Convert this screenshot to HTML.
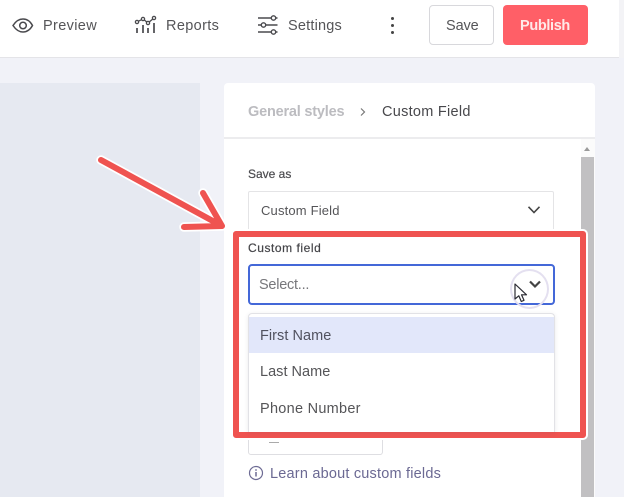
<!DOCTYPE html>
<html>
<head>
<meta charset="utf-8">
<style>
html,body{margin:0;padding:0}
body{width:624px;height:497px;overflow:hidden;position:relative;background:#f1f2f8;font-family:"Liberation Sans","DejaVu Sans",sans-serif}
div,span,svg{position:absolute}
.t{white-space:nowrap;line-height:20px;height:20px;color:#555558;filter:blur(.25px)}
</style>
</head>
<body>
<div style="left:0;top:0;width:619px;height:57px;background:#fff;border-bottom:1px solid #e4e4e8"></div>
<div style="left:619px;top:0;width:5px;height:58px;background:#f3f3f6"></div>
<div style="left:0;top:83px;width:200px;height:414px;background:#e6e9f1"></div>

<svg style="left:10px;top:12px" width="24" height="26" viewBox="0 0 24 26" fill="none" stroke="#4a4a4e" stroke-width="1.5"><path d="M3 13.5C6 8.8 9 7 13 7s7 1.800 9.500 6.500C20 18 17 20 13 20s-7-2-10-6.500z"/><circle cx="13" cy="13.500" r="3.300"/></svg>
<span class="t" style="left:43px;top:16px;font-size:14.500px;letter-spacing:.35px">Preview</span>

<svg style="left:133px;top:14px" width="26" height="24" viewBox="0 0 26 24" fill="none" stroke="#4a4a4e" stroke-width="1.300"><circle cx="4" cy="8" r="1.600"/><circle cx="10" cy="5" r="1.600"/><circle cx="15" cy="9" r="1.600"/><circle cx="21" cy="4" r="1.600"/><path d="M5.400 7.200L8.600 5.700M11.300 6L13.800 8M16.200 8L19.800 5"/><path stroke-width="1.700" d="M4 14v5M10 11v8M15 14v5M21 9v10"/></svg>
<span class="t" style="left:166px;top:16px;font-size:14.500px;letter-spacing:.35px">Reports</span>

<svg style="left:256px;top:14px" width="24" height="22" viewBox="0 0 24 22" fill="none" stroke="#4a4a4e" stroke-width="1.400"><path d="M2 4h13M20 4h1.500M2 11h3M10 11h11.500M2 18h13M20 18h1.500"/><circle cx="17.500" cy="4" r="2.200"/><circle cx="7.500" cy="11" r="2.200"/><circle cx="17.500" cy="18" r="2.200"/></svg>
<span class="t" style="left:288px;top:16px;font-size:14.500px;letter-spacing:.2px">Settings</span>

<div style="left:391px;top:17px;width:3px;height:3px;border-radius:50%;background:#444"></div>
<div style="left:391px;top:24px;width:3px;height:3px;border-radius:50%;background:#444"></div>
<div style="left:391px;top:31px;width:3px;height:3px;border-radius:50%;background:#444"></div>

<div style="left:429px;top:5px;width:65px;height:40px;box-sizing:border-box;background:#fff;border:1px solid #d8d8dc;border-radius:4px"></div>
<span class="t" style="left:446px;top:16px;font-size:14.500px;letter-spacing:-.1px">Save</span>
<div style="left:503px;top:5px;width:85px;height:40px;background:#ff5f67;border-radius:4px"></div>
<span class="t" style="left:520px;top:16px;font-size:14.500px;font-weight:bold;color:#ffe9e9;letter-spacing:-.35px">Publish</span>

<div style="left:224px;top:83px;width:371px;height:414px;background:#fff;border-radius:4px 4px 0 0"></div>
<div style="left:224px;top:137px;width:371px;height:2px;background:#ececee"></div>
<span class="t" style="left:248px;top:102px;font-size:14.500px;font-weight:bold;color:#bcbcc0;letter-spacing:-.2px">General styles</span>
<svg style="left:359px;top:107px" width="8" height="10" viewBox="0 0 8 10" fill="none" stroke="#777" stroke-width="1.200"><path d="M2 1.500L5.500 5L2 8.500"/></svg>
<span class="t" style="left:382px;top:102px;font-size:14.500px;letter-spacing:.27px;color:#48484c">Custom Field</span>

<div style="left:581px;top:139px;width:14px;height:358px;background:#fbfbfb"></div>
<div style="left:581px;top:157px;width:13px;height:340px;background:#c1c0c2"></div>
<div style="left:584px;top:147px;width:0;height:0;border-left:3.500px solid transparent;border-right:3.500px solid transparent;border-bottom:4px solid #9a9a9a"></div>

<span class="t" style="left:248px;top:164px;font-size:12px;letter-spacing:.0px;color:#4a4a4e;-webkit-text-stroke:.2px #4a4a4e">Save as</span>
<div style="left:248px;top:191px;width:306px;height:50px;box-sizing:border-box;border:1px solid #e4e4e6;border-radius:2px"></div>
<span class="t" style="left:261px;top:201px;font-size:13px;letter-spacing:.17px">Custom Field</span>
<svg style="left:527px;top:205px" width="14" height="10" viewBox="0 0 14 10" fill="none" stroke="#444" stroke-width="1.600"><path d="M1.500 1.800L7 7.500L12.500 1.800"/></svg>

<svg style="left:0;top:0" width="624" height="497" viewBox="0 0 624 497" fill="none" stroke-linecap="round" stroke-linejoin="round">
<path d="M101 160L222 226M203 193L222 226L184 227" stroke="#fff" stroke-width="9.500"/>
<path d="M101 160L222 226M203 193L222 226L184 227" stroke="#ef5350" stroke-width="6"/>
</svg>

<div style="left:248px;top:425px;width:135px;height:30px;box-sizing:border-box;background:#fff;border:1px solid #dedee2;border-radius:3px"></div>
<div style="left:269px;top:442px;width:10px;height:1px;background:#aaa"></div>

<div style="left:231px;top:229px;width:357px;height:211px;background:#fff;border-radius:5px"></div>
<div style="left:233px;top:231px;width:353px;height:207px;box-sizing:border-box;border:6px solid #ef5350;border-radius:3px;background:#fff"></div>

<span class="t" style="left:248px;top:238px;font-size:12px;letter-spacing:.55px;color:#444448;-webkit-text-stroke:.2px #444448">Custom field</span>
<div style="left:248px;top:264px;width:307px;height:41px;box-sizing:border-box;border:2px solid #4468d8;border-radius:4px;background:#fff"></div>
<span class="t" style="left:259px;top:275px;font-size:14.500px;letter-spacing:-.25px;color:#77777b">Select...</span>
<div style="left:510px;top:269px;width:39px;height:40px;box-sizing:border-box;border:2px solid #e4e0f0;border-radius:50%"></div>
<svg style="left:528px;top:279px" width="14" height="11" viewBox="0 0 14 11" fill="none" stroke="#444" stroke-width="2.200"><path d="M2 2.500L7 7.500L12 2.500"/></svg>
<svg style="left:513px;top:282px" width="16" height="22" viewBox="0 0 16 22"><path d="M2 2V17L5.800 13.800L8.300 19.500L11 18.300L8.500 12.800H13.500z" fill="#fff" stroke="#2b2b33" stroke-width="1.200" stroke-linejoin="round"/></svg>

<div style="left:248px;top:313px;width:307px;height:119px;box-sizing:border-box;background:#fff;border:1px solid #e2e2e6;border-bottom:0;border-radius:4px 4px 0 0;box-shadow:0 1px 4px rgba(80,80,100,.12)"></div>
<div style="left:249px;top:317px;width:305px;height:36px;background:#e2e7fa"></div>
<span class="t" style="left:260px;top:326px;font-size:14.500px;letter-spacing:.05px;color:#51525f">First Name</span>
<span class="t" style="left:260px;top:362px;font-size:14.500px;letter-spacing:.02px">Last Name</span>
<span class="t" style="left:260px;top:399px;font-size:14.500px;letter-spacing:.27px">Phone Number</span>

<svg style="left:248px;top:465px" width="16" height="16" viewBox="0 0 16 16" fill="none" stroke="#6d6b94" stroke-width="1.200"><circle cx="8" cy="8" r="6.500"/><path d="M8 7v4.500M8 4.300v1.400" stroke-width="1.500"/></svg>
<span class="t" style="left:270px;top:464px;font-size:14.500px;letter-spacing:.2px;color:#6b6993">Learn about custom fields</span>
</body>
</html>
